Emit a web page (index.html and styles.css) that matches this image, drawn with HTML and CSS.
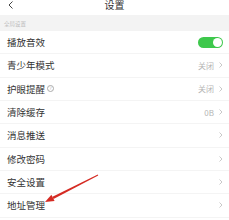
FILE: index.html
```html
<!DOCTYPE html>
<html lang="zh">
<head>
<meta charset="utf-8">
<link rel="stylesheet" href="styles.css">
</head>
<body>
<div class="page">
  <header class="header">
    <svg class="back" width="6" height="8" viewBox="0 0 6 8"><path d="M4.5 0.5 L1 4 L4.5 7.5" fill="none" stroke="#444" stroke-width="1"/></svg>
    <div class="title">设置</div>
  </header>
  <div class="band"><span class="band-label">全局设置</span></div>
  <div class="list">
    <div class="row"><span class="name">播放音效</span><span class="toggle"><span class="knob"></span></span></div>
    <div class="row"><span class="name">青少年模式</span><span class="val">关闭<svg class="chev" width="4" height="6" viewBox="0 0 4 6"><path d="M0.5 0.5 L3 3 L0.5 5.5" fill="none" stroke="#bbb" stroke-width="0.8"/></svg></span></div>
    <div class="row"><span class="name">护眼提醒<span class="help">?</span></span><span class="val">关闭<svg class="chev" width="4" height="6" viewBox="0 0 4 6"><path d="M0.5 0.5 L3 3 L0.5 5.5" fill="none" stroke="#bbb" stroke-width="0.8"/></svg></span></div>
    <div class="row"><span class="name">清除缓存</span><span class="val">0B<svg class="chev" width="4" height="6" viewBox="0 0 4 6"><path d="M0.5 0.5 L3 3 L0.5 5.5" fill="none" stroke="#bbb" stroke-width="0.8"/></svg></span></div>
    <div class="row"><span class="name">消息推送</span><span class="val"><svg class="chev" width="4" height="6" viewBox="0 0 4 6"><path d="M0.5 0.5 L3 3 L0.5 5.5" fill="none" stroke="#bbb" stroke-width="0.8"/></svg></span></div>
    <div class="row"><span class="name">修改密码</span><span class="val"><svg class="chev" width="4" height="6" viewBox="0 0 4 6"><path d="M0.5 0.5 L3 3 L0.5 5.5" fill="none" stroke="#bbb" stroke-width="0.8"/></svg></span></div>
    <div class="row"><span class="name">安全设置</span><span class="val"><svg class="chev" width="4" height="6" viewBox="0 0 4 6"><path d="M0.5 0.5 L3 3 L0.5 5.5" fill="none" stroke="#bbb" stroke-width="0.8"/></svg></span></div>
    <div class="row"><span class="name">地址管理</span><span class="val"><svg class="chev" width="4" height="6" viewBox="0 0 4 6"><path d="M0.5 0.5 L3 3 L0.5 5.5" fill="none" stroke="#bbb" stroke-width="0.8"/></svg></span></div>
  </div>
  <svg class="arrow" width="229" height="220" viewBox="0 0 229 220">
    <polygon points="98.2,175.4 97.8,174.6 52.5,196.8 53.5,199.0" fill="#d52b23"/>
    <polygon points="45,202 54.6,201.0 51.4,194.8" fill="#d52b23"/>
  </svg>
</div>
</body>
</html>
```
FILE: styles.css
```css
html, body {
  margin: 0;
  padding: 0;
  background: #fff;
}
.page {
  position: relative;
  width: 229px;
  height: 220px;
  overflow: hidden;
  font-family: "Noto Sans CJK SC", "Noto Sans", sans-serif;
  color: #333;
}
.header {
  position: relative;
  height: 15px;
  display: flex;
  justify-content: center;
}
.back {
  position: absolute;
  left: 8px;
  top: 1px;
}
.title {
  font-size: 10px;
  line-height: 10px;
  color: #333;
}
.band {
  height: 16px;
  background: #f3f3f3;
  display: flex;
  align-items: flex-end;
  padding-left: 4px;
  box-sizing: border-box;
  padding-bottom: 4px;
}
.band-label {
  font-size: 5.5px;
  line-height: 6px;
  color: #bbb;
}
.list {
  display: flex;
  flex-direction: column;
}
.row {
  height: 23.33px;
  box-sizing: border-box;
  display: flex;
  align-items: center;
  justify-content: space-between;
  padding: 0 6px 0 7px;
  border-bottom: 0.5px solid #f4f4f4;
}
.name {
  font-size: 9.5px;
  color: #333;
  display: flex;
  align-items: center;
}
.help {
  display: inline-flex;
  align-items: center;
  justify-content: center;
  width: 5px;
  height: 5px;
  border: 0.6px solid #aaa;
  border-radius: 50%;
  font-size: 4.5px;
  line-height: 5px;
  color: #aaa;
  margin-left: 2px;
}
.val {
  display: flex;
  align-items: center;
  gap: 5px;
  font-size: 8px;
  color: #b5b5b5;
}
.chev {
  display: block;
}
.toggle {
  width: 25px;
  height: 11px;
  border-radius: 6px;
  background: #3ec84c;
  display: flex;
  align-items: center;
  justify-content: flex-end;
  padding-right: 1px;
  box-sizing: border-box;
}
.knob {
  width: 9px;
  height: 9px;
  border-radius: 50%;
  background: #fff;
}
.arrow {
  position: absolute;
  left: 0;
  top: 0;
  pointer-events: none;
}
```
